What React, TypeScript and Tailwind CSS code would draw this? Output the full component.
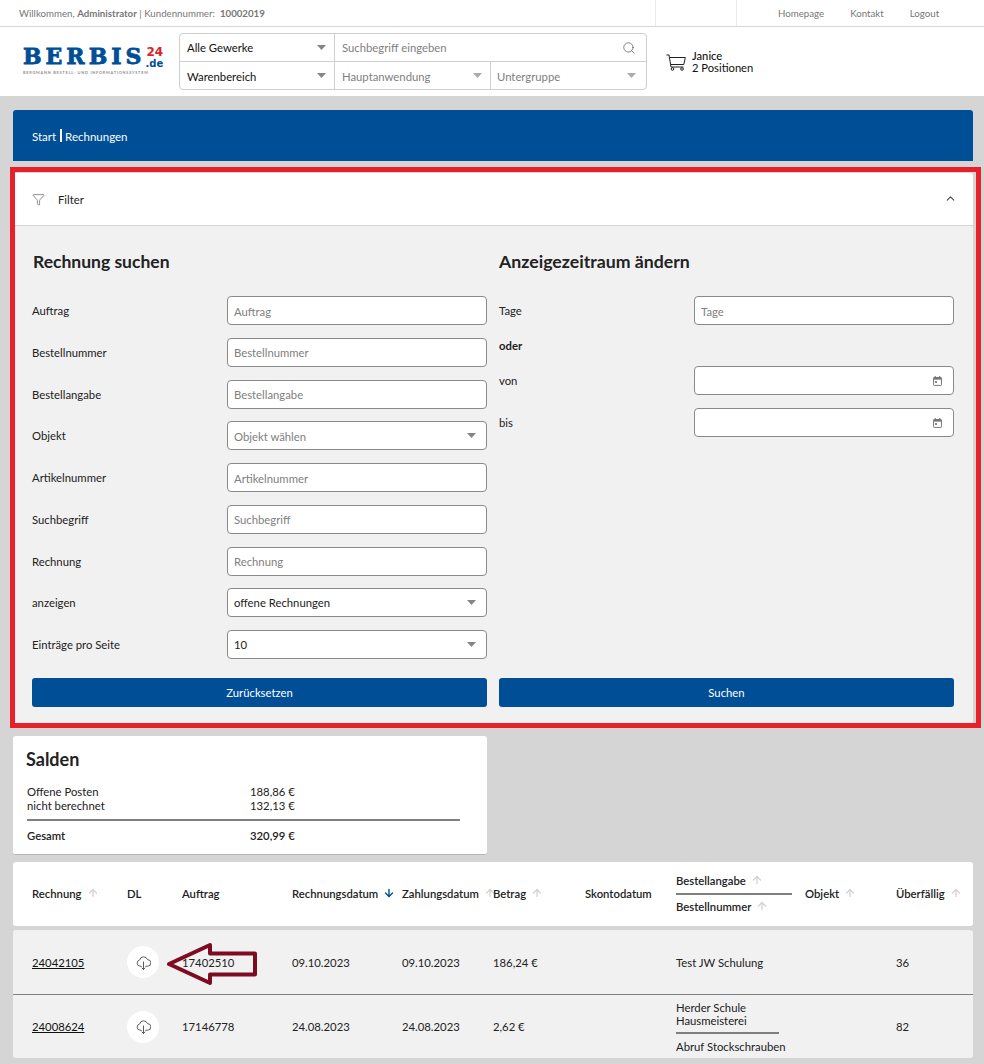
import React from "react";
import { Search, ChevronUp, Filter, ArrowUp, ArrowDown } from "lucide-react";

const Caret = ({ light = false }: { light?: boolean }) => (
  <svg width="9" height="5" viewBox="0 0 9 5" className="shrink-0">
    <path d="M0 0h9L4.5 5z" fill={light ? "#ababab" : "#858585"} />
  </svg>
);

const Up = () => <ArrowUp size={12} strokeWidth={2.6} className="inline-block text-[#d2d2d2] ml-[5px] align-[-1px]" />;

const CalIcon = () => (
  <svg width="9" height="10" viewBox="0 0 10 11" className="shrink-0 mr-[1px]">
    <path d="M2.5 0v2M7.5 0v2" stroke="#777" strokeWidth="1.2" />
    <rect x="0.6" y="1.6" width="8.8" height="8.8" rx="0.8" fill="none" stroke="#777" strokeWidth="1.1" />
    <rect x="0.6" y="1.6" width="8.8" height="2.4" fill="#777" />
    <rect x="2.2" y="5.6" width="2.2" height="2" fill="#777" />
  </svg>
);

const CloudIcon = () => (
  <svg width="15" height="15" viewBox="0 0 14 14" fill="none" stroke="#555" strokeWidth="0.9" strokeLinecap="round" strokeLinejoin="round">
    <path d="M5 10.5H3.8a3 3 0 0 1-.4-5.9 3.8 3.8 0 0 1 7.3-.3 3 3 0 0 1 .1 6.2H9" />
    <path d="M7 6.5v7M5.6 12.1 7 13.5l1.4-1.4" />
  </svg>
);

const CartIcon = () => (
  <svg width="20" height="17" viewBox="0 0 20 17" fill="none" stroke="#222" strokeWidth="1" className="shrink-0">
    <path d="M0.5 1H3L5 13H17.5" />
    <path d="M3.4 3.5H19.3L17.8 10.5H4.5" />
    <circle cx="6.5" cy="15" r="1.3" />
    <circle cx="16" cy="15" r="1.3" />
  </svg>
);

const Label = ({ children }: { children: React.ReactNode }) => (
  <div className="w-[195px] shrink-0 pt-[2px] text-[11.3px] text-[#222]">{children}</div>
);

const Field = ({ label, children }: { label: string; children: React.ReactNode }) => (
  <div className="flex items-center h-[29px]">
    <Label>{label}</Label>
    <div className="flex-1 h-[29px] bg-white border border-[#8a8a8a] rounded-[4px] flex items-center justify-between pl-[6px] pr-[10px] text-[11.3px] overflow-hidden">
      {children}
    </div>
  </div>
);

const Ph = ({ children }: { children: React.ReactNode }) => <span className="pt-[3px] text-[#808080] text-[11.3px]">{children}</span>;
const Val = ({ children }: { children: React.ReactNode }) => <span className="pt-[2px] text-[#222] text-[11.3px]">{children}</span>;

const cols = "grid grid-cols-[95px_55px_110px_110px_91px_92px_91px_129px_91px_1fr] items-center pl-[19px]";

const Row = ({ nr, auftrag, d1, d2, betrag, angabe, over, border }: { nr: string; auftrag: string; d1: string; d2: string; betrag: string; angabe: React.ReactNode; over: string; border?: boolean }) => (
  <div className={`${cols} text-[11.3px] text-[#222] ${border ? "h-[65px] border-b border-[#7f7f7f]" : "h-[63px]"}`}>
    <span className="pt-[2px]"><span className="underline text-[#111]">{nr}</span></span>
    <span className="w-[32px] h-[32px] rounded-full bg-white flex items-center justify-center">
      <CloudIcon />
    </span>
    <span className="pt-[2px]">{auftrag}</span>
    <span className="pt-[2px]">{d1}</span>
    <span className="pt-[2px]">{d2}</span>
    <span className="pt-[2px]">{betrag}</span>
    <span />
    <div className="pt-[2px]">{angabe}</div>
    <span />
    <span className="pt-[2px]">{over}</span>
  </div>
);

export default function App() {
  return (
    <div className="h-[1064px] overflow-hidden bg-[#d5d5d5] font-['Lato','Liberation_Sans',sans-serif] text-[11.3px]">
      {/* top bar */}
      <div className="h-[27px] bg-white border-b border-[#d5d5d5] flex items-stretch text-[9.7px] text-[#777]">
        <div className="pl-[19px] w-[655px] shrink-0 flex items-center">
          <span>Willkommen, <span className="font-bold">Administrator</span> | Kundennummer:&nbsp; <span className="font-bold">10002019</span></span>
        </div>
        <div className="w-[82px] shrink-0 border-x border-[#eaeaea]" />
        <div className="flex items-center pl-[41px] gap-[26px]">
          <span>Homepage</span>
          <span>Kontakt</span>
          <span>Logout</span>
        </div>
      </div>

      {/* header */}
      <div className="h-[69px] bg-white flex items-start">
        <div className="w-[179px] shrink-0 pl-[23px] pt-[19px]">
          <div className="flex items-start justify-between w-[140px] h-[24px]">
            <span className="font-['DejaVu_Serif',serif] font-bold text-[#004e96] text-[22px] leading-[20px] tracking-[4px] whitespace-nowrap [-webkit-text-stroke:0.8px_#004e96]">BERBIS</span>
            <span className="flex flex-col items-end font-['DejaVu_Sans',sans-serif] font-bold">
              <span className="text-[#d8232a] text-[12px] leading-[12px]">24</span>
              <span className="text-[#004e96] text-[10px] leading-[10px] mt-[1px]">.de</span>
            </span>
          </div>
          <div className="text-[3.9px] leading-[5px] text-[#8f8f8f] tracking-[0.75px] whitespace-nowrap font-bold">BERGMANN BESTELL- UND INFORMATIONSSYSTEM</div>
        </div>
        <div className="mt-[6px] w-[468px] h-[57px] border border-[#cfcfcf] rounded-[4px] flex flex-col shrink-0">
          <div className="h-[28px] border-b border-[#cfcfcf] flex">
            <div className="w-[155px] border-r border-[#cfcfcf] flex items-center justify-between pl-[7px] pr-[8px]">
              <span className="pt-[2px] text-[#111] text-[11.3px]">Alle Gewerke</span>
              <Caret />
            </div>
            <div className="flex-1 flex items-center justify-between pl-[7px] pr-[10px]">
              <span className="pt-[2px] text-[#808080] text-[11.3px]">Suchbegriff eingeben</span>
              <Search size={14} strokeWidth={1.1} className="text-[#444]" />
            </div>
          </div>
          <div className="flex-1 flex">
            <div className="w-[155px] border-r border-[#cfcfcf] flex items-center justify-between pl-[7px] pr-[8px]">
              <span className="pt-[3px] text-[#111] text-[11.3px]">Warenbereich</span>
              <Caret />
            </div>
            <div className="w-[156px] border-r border-[#cfcfcf] flex items-center justify-between pl-[7px] pr-[8px]">
              <span className="pt-[3px] text-[#808080] text-[11.3px]">Hauptanwendung</span>
              <Caret light />
            </div>
            <div className="flex-1 flex items-center justify-between pl-[6px] pr-[10px]">
              <span className="pt-[3px] text-[#808080] text-[11.3px]">Untergruppe</span>
              <Caret light />
            </div>
          </div>
        </div>
        <div className="ml-[19px] mt-[23px] flex items-center gap-[6px] text-[#111] text-[11.2px] leading-[12px]">
          <CartIcon />
          <div>
            <div className="font-medium">Janice</div>
            <div>2 Positionen</div>
          </div>
        </div>
      </div>

      {/* main */}
      <div className="px-[13px] pr-[11px] pt-[14px]">
        <div className="h-[51px] bg-[#004e96] rounded-t-[3px] flex items-center pl-[19px] text-white text-[11.5px]">
          <span className="pt-[3px]">Start&nbsp;</span>
          <span className="inline-block w-[1.5px] h-[13px] bg-white mr-[3.5px] ml-[1px]" />
          <span className="pt-[3px]">Rechnungen</span>
        </div>

        <div className="relative mt-[12px]">
          <div className="absolute left-[-3px] top-[-6px] right-[-8px] bottom-[-3px] border-[5px] border-[#e8202a] pointer-events-none z-10" />
          <div className="h-[53px] bg-white border-b border-[#d5d5d5] rounded-t-[3px] flex items-center justify-between pl-[19px] pr-[16px]">
            <div className="flex items-center gap-[13px] text-[11.3px] text-[#222]">
              <Filter size={13} strokeWidth={1} className="text-[#333]" />
              <span className="pt-[2px]">Filter</span>
            </div>
            <ChevronUp size={13} strokeWidth={2} className="text-[#444] mt-[-2px]" />
          </div>
          <div className="bg-[#f1f1f1] h-[499px] pl-[19px] pr-[19px] pt-[25px]">
            <div className="grid grid-cols-2 gap-x-[12px]">
              <div>
                <h2 className="pl-[1px] font-bold text-[17.5px] leading-[22px] text-[#222]">Rechnung suchen</h2>
                <div className="mt-[23px] flex flex-col gap-[12.75px]">
                  <Field label="Auftrag"><Ph>Auftrag</Ph></Field>
                  <Field label="Bestellnummer"><Ph>Bestellnummer</Ph></Field>
                  <Field label="Bestellangabe"><Ph>Bestellangabe</Ph></Field>
                  <Field label="Objekt"><Ph>Objekt wählen</Ph><Caret /></Field>
                  <Field label="Artikelnummer"><Ph>Artikelnummer</Ph></Field>
                  <Field label="Suchbegriff"><Ph>Suchbegriff</Ph></Field>
                  <Field label="Rechnung"><Ph>Rechnung</Ph></Field>
                  <Field label="anzeigen"><Val>offene Rechnungen</Val><Caret /></Field>
                  <Field label="Einträge pro Seite"><Val>10</Val><Caret /></Field>
                </div>
              </div>
              <div>
                <h2 className="font-bold text-[17.7px] leading-[22px] text-[#222]">Anzeigezeitraum ändern</h2>
                <div className="mt-[23px] flex flex-col">
                  <Field label="Tage"><Ph>Tage</Ph></Field>
                  <div className="h-[41px] pt-[2px] flex items-center font-bold text-[11.3px] text-[#222]">oder</div>
                  <Field label="von"><span /><CalIcon /></Field>
                  <div className="h-[13px]" />
                  <Field label="bis"><span /><CalIcon /></Field>
                </div>
              </div>
            </div>
            <div className="grid grid-cols-2 gap-x-[12px] mt-[19px]">
              <div className="h-[29px] bg-[#004e96] rounded-[3px] text-white text-[11.3px] pt-[1px] flex items-center justify-center">Zurücksetzen</div>
              <div className="h-[29px] bg-[#004e96] rounded-[3px] text-white text-[11.3px] pt-[1px] flex items-center justify-center">Suchen</div>
            </div>
          </div>
        </div>

        {/* Salden */}
        <div className="mt-[11px] w-[474px] h-[119px] bg-white rounded-[3px] border-b border-[#b5b5b5] pl-[13px] pt-[11px] text-[11.3px] text-[#222]">
          <h2 className="font-bold text-[18px] leading-[24px] text-[#222]">Salden</h2>
          <div className="mt-[14px] leading-[14px]">
            <div className="flex"><span className="w-[224px] pl-[1px]">Offene Posten</span><span>188,86 €</span></div>
            <div className="flex"><span className="w-[224px] pl-[1px]">nicht berechnet</span><span>132,13 €</span></div>
          </div>
          <div className="h-[2px] w-[433px] ml-[1px] bg-[#7f7f7f] mt-[6px]" />
          <div className="flex mt-[8px] font-semibold leading-[14px]"><span className="w-[224px] pl-[1px]">Gesamt</span><span>320,99 €</span></div>
        </div>

        {/* table head */}
        <div className={`${cols} mt-[7px] h-[64px] bg-white rounded-[3px] text-[11.3px] text-[#222] font-semibold`}>
          <span>Rechnung<Up /></span>
          <span>DL</span>
          <span>Auftrag</span>
          <span className="whitespace-nowrap">Rechnungsdatum<ArrowDown size={12} strokeWidth={2.8} className="inline-block text-[#004e96] ml-[5px] align-[-1px]" /></span>
          <span className="whitespace-nowrap">Zahlungsdatum<Up /></span>
          <span>Betrag<Up /></span>
          <span>Skontodatum</span>
          <div className="flex flex-col">
            <span className="leading-[14px]">Bestellangabe<Up /></span>
            <div className="my-[5px] h-[2px] w-[116px] bg-[#7f7f7f]" />
            <span className="leading-[14px]">Bestellnummer<Up /></span>
          </div>
          <span>Objekt<Up /></span>
          <span>Überfällig<Up /></span>
        </div>

        {/* rows */}
        <div className="relative mt-[4px] bg-[#f1f1f1] rounded-[3px]">
          <Row nr="24042105" auftrag="17402510" d1="09.10.2023" d2="09.10.2023" betrag="186,24 €" angabe="Test JW Schulung" over="36" border />
          <Row
            nr="24008624"
            auftrag="17146778"
            d1="24.08.2023"
            d2="24.08.2023"
            betrag="2,62 €"
            over="82"
            angabe={
              <div className="flex flex-col leading-[13px] mt-[-2px]">
                <span>Herder Schule</span>
                <span>Hausmeisterei</span>
                <div className="mt-[5px] mb-[6px] h-[2px] w-[103px] bg-[#7f7f7f]" />
                <span>Abruf Stockschrauben</span>
              </div>
            }
          />
          <svg width="92" height="44" viewBox="0 0 92 44" className="absolute left-[153px] top-[12px]">
            <path d="M3 22 L44 3 L44 11.5 L89 11.5 L89 32.5 L44 32.5 L44 41 Z" fill="none" stroke="#7d0c22" strokeWidth="4" strokeLinejoin="round" />
          </svg>
        </div>
      </div>
    </div>
  );
}
